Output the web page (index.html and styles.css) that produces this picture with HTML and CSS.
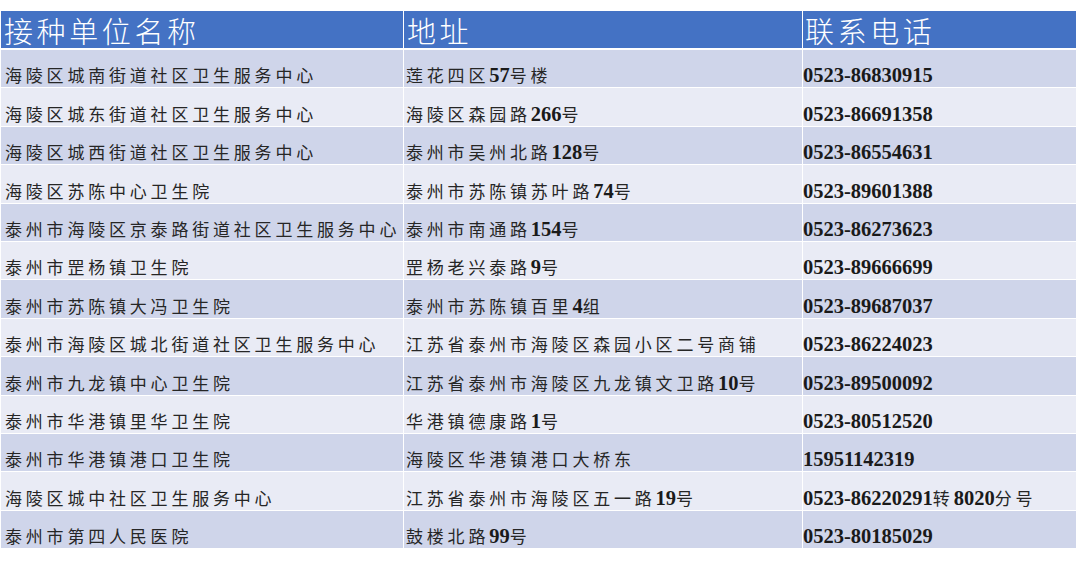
FILE: index.html
```html
<!DOCTYPE html>
<html lang="zh">
<head>
<meta charset="utf-8">
<title>接种单位</title>
<link rel="stylesheet" href="styles.css">
</head>
<body>
<div class="table">
  <div class="row head">
    <div class="cell c1">接种单位名称</div>
    <div class="cell c2">地址</div>
    <div class="cell c3">联系电话</div>
  </div>
  <div class="row">
    <div class="cell c1">海陵区城南街道社区卫生服务中心</div>
    <div class="cell c2">莲花四区<span class="n">57</span>号楼</div>
    <div class="cell c3"><span class="n">0523-86830915</span></div>
  </div>
  <div class="row">
    <div class="cell c1">海陵区城东街道社区卫生服务中心</div>
    <div class="cell c2">海陵区森园路<span class="n">266</span>号</div>
    <div class="cell c3"><span class="n">0523-86691358</span></div>
  </div>
  <div class="row">
    <div class="cell c1">海陵区城西街道社区卫生服务中心</div>
    <div class="cell c2">泰州市吴州北路<span class="n">128</span>号</div>
    <div class="cell c3"><span class="n">0523-86554631</span></div>
  </div>
  <div class="row">
    <div class="cell c1">海陵区苏陈中心卫生院</div>
    <div class="cell c2">泰州市苏陈镇苏叶路<span class="n">74</span>号</div>
    <div class="cell c3"><span class="n">0523-89601388</span></div>
  </div>
  <div class="row">
    <div class="cell c1">泰州市海陵区京泰路街道社区卫生服务中心</div>
    <div class="cell c2">泰州市南通路<span class="n">154</span>号</div>
    <div class="cell c3"><span class="n">0523-86273623</span></div>
  </div>
  <div class="row">
    <div class="cell c1">泰州市罡杨镇卫生院</div>
    <div class="cell c2">罡杨老兴泰路<span class="n">9</span>号</div>
    <div class="cell c3"><span class="n">0523-89666699</span></div>
  </div>
  <div class="row">
    <div class="cell c1">泰州市苏陈镇大冯卫生院</div>
    <div class="cell c2">泰州市苏陈镇百里<span class="n">4</span>组</div>
    <div class="cell c3"><span class="n">0523-89687037</span></div>
  </div>
  <div class="row">
    <div class="cell c1">泰州市海陵区城北街道社区卫生服务中心</div>
    <div class="cell c2">江苏省泰州市海陵区森园小区二号商铺</div>
    <div class="cell c3"><span class="n">0523-86224023</span></div>
  </div>
  <div class="row">
    <div class="cell c1">泰州市九龙镇中心卫生院</div>
    <div class="cell c2">江苏省泰州市海陵区九龙镇文卫路<span class="n">10</span>号</div>
    <div class="cell c3"><span class="n">0523-89500092</span></div>
  </div>
  <div class="row">
    <div class="cell c1">泰州市华港镇里华卫生院</div>
    <div class="cell c2">华港镇德康路<span class="n">1</span>号</div>
    <div class="cell c3"><span class="n">0523-80512520</span></div>
  </div>
  <div class="row">
    <div class="cell c1">泰州市华港镇港口卫生院</div>
    <div class="cell c2">海陵区华港镇港口大桥东</div>
    <div class="cell c3"><span class="n">15951142319</span></div>
  </div>
  <div class="row">
    <div class="cell c1">海陵区城中社区卫生服务中心</div>
    <div class="cell c2">江苏省泰州市海陵区五一路<span class="n">19</span>号</div>
    <div class="cell c3"><span class="n">0523-86220291</span>转<span class="n">8020</span>分号</div>
  </div>
  <div class="row">
    <div class="cell c1">泰州市第四人民医院</div>
    <div class="cell c2">鼓楼北路<span class="n">99</span>号</div>
    <div class="cell c3"><span class="n">0523-80185029</span></div>
  </div>
</div>
</body>
</html>
```

FILE: styles.css
```css
html, body {
  margin: 0;
  padding: 0;
  background: #ffffff;
}

body {
  font-family: "Noto Sans CJK SC", "Noto Sans", sans-serif;
}

.table {
  margin: 11px 0 0 1px;
  width: 1075px;
  display: flex;
  flex-direction: column;
  gap: 1px;
}

.row {
  display: grid;
  grid-template-columns: 402px 398px 273px;
  column-gap: 1px;
  height: 37.4px;
}

.row.head {
  height: 36px;
  margin-bottom: 2px;
}

.cell {
  display: flex;
  align-items: flex-end;
  white-space: nowrap;
  overflow: visible;
  font-size: 17px;
  line-height: 20px;
  letter-spacing: 3.8px;
  color: #262626;
  padding-bottom: 2px;
  box-sizing: border-box;
}

.row:nth-child(even) .cell {
  background: #cfd5ea;
}

.row:nth-child(odd) .cell {
  background: #e9ebf5;
}

.c1 { padding-left: 4px; }
.c2 { padding-left: 2px; }
.c3 { padding-left: 0; }

.row.head .cell {
  background: #4472c4;
  color: #ffffff;
  font-size: 29px;
  font-weight: 300;
  line-height: 36px;
  letter-spacing: 3.6px;
  align-items: center;
  padding-bottom: 0;
  padding-top: 1px;
}

.row.head .c1 { padding-left: 3px; }
.row.head .c2 { padding-left: 3px; }
.row.head .c3 { padding-left: 2px; }

.n {
  font-family: "Liberation Serif", "Times New Roman", serif;
  font-weight: bold;
  font-size: 20.5px;
  letter-spacing: 0;
  color: #1a1a1a;
}
```
